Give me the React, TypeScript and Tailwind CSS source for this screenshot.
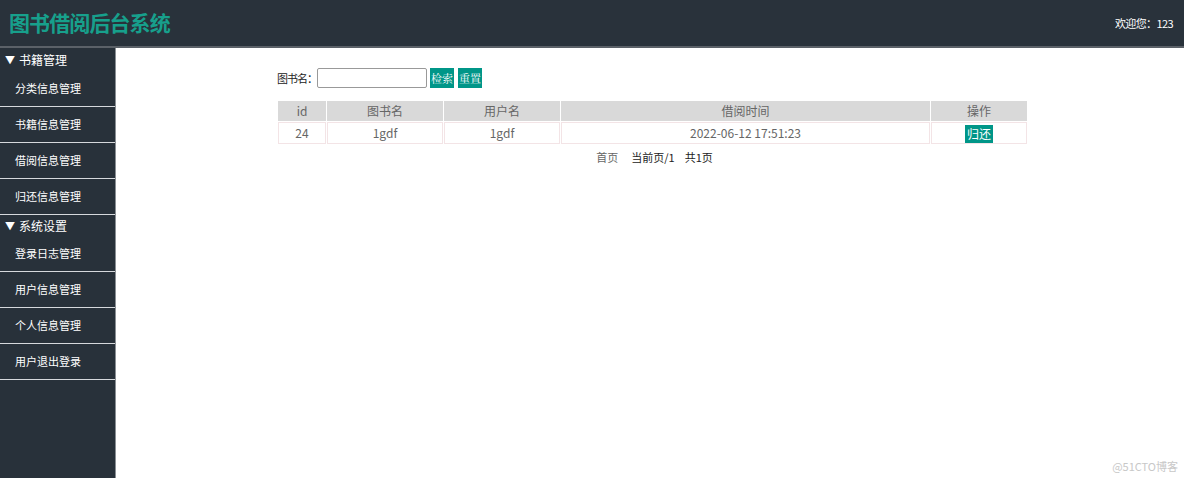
import React from "react";

const font = { fontFamily: '"Noto Sans CJK SC", "Noto Sans", sans-serif' };
const serif = { fontFamily: '"Noto Serif CJK SC", "Noto Sans CJK SC", serif' };

const group1 = ["分类信息管理", "书籍信息管理", "借阅信息管理", "归还信息管理"];
const group2 = ["登录日志管理", "用户信息管理", "个人信息管理", "用户退出登录"];

function Group({ title, items, h }: { title: string; items: string[]; h: string }) {
  return (
    <div>
      <div className={`${h} flex items-center pl-[5px] text-[12px] text-white`}>
        <span className="text-[10px] mr-[4px]">▼</span>
        {title}
      </div>
      {items.map((it) => (
        <div
          key={it}
          className="h-[36px] flex items-center pl-[15px] text-[11px] text-white border-b border-[#d6d9dc]"
        >
          {it}
        </div>
      ))}
    </div>
  );
}

export default function App() {
  return (
    <div className="relative w-full h-screen flex flex-col bg-white overflow-hidden" style={font}>
      <header className="h-[48px] shrink-0 bg-[#29323b] border-b-2 border-[#5b6168] flex items-center justify-between pl-[9px] pr-[11px]">
        <div className="text-[21px] font-bold text-[#17a08c] tracking-[-0.9px]">图书借阅后台系统</div>
        <div className="text-[11px] text-white tracking-[-0.6px]">欢迎您：123</div>
      </header>
      <div className="flex flex-1 min-h-0">
        <aside className="w-[116px] shrink-0 bg-[#28313a] border-r border-[#8a8f94]">
          <Group title="书籍管理" items={group1} h="h-[23px]" />
          <Group title="系统设置" items={group2} h="h-[21px]" />
        </aside>
        <main className="flex-1 pl-[161px] pt-[20px]">
          <div className="flex items-center h-[20px] text-[11px] text-[#222]">
            <span className="tracking-[-1px]">图书名：</span>
            <input className="w-[110px] h-[20px] border border-[#999] rounded-[2px] outline-none" />
            <button className="ml-[3px] h-[20px] px-[1px] bg-[#009688] text-white text-[11px] leading-none" style={serif}>检索</button>
            <button className="ml-[4px] h-[20px] px-[1px] bg-[#009688] text-white text-[11px] leading-none" style={serif}>重置</button>
          </div>
          <table className="mt-[12px] table-fixed border-separate border-spacing-[1px] w-[751px] text-[12px] text-[#666]">
            <colgroup>
              <col className="w-[48px]" />
              <col className="w-[116px]" />
              <col className="w-[116px]" />
              <col className="w-[369px]" />
              <col className="w-[96px]" />
            </colgroup>
            <thead>
              <tr className="h-[20px]">
                {["id", "图书名", "用户名", "借阅时间", "操作"].map((h) => (
                  <th key={h} className="bg-[#d9d9d9] font-normal text-center p-0 leading-[20px]">{h}</th>
                ))}
              </tr>
            </thead>
            <tbody>
              <tr className="h-[21px]">
                <td className="border border-[#f3e4e6] text-center p-0">24</td>
                <td className="border border-[#f3e4e6] text-center p-0">1gdf</td>
                <td className="border border-[#f3e4e6] text-center p-0">1gdf</td>
                <td className="border border-[#f3e4e6] text-center p-0">2022-06-12 17:51:23</td>
                <td className="border border-[#f3e4e6] text-center p-0">
                  <span className="inline-block bg-[#009688] text-white px-[2px] h-[18px] leading-[18px] align-middle">归还</span>
                </td>
              </tr>
            </tbody>
          </table>
          <div className="w-[751px] flex justify-center mt-[4px] text-[11px] text-[#222] pl-[4px]">
            <span className="text-[#666]">首页</span>
            <span className="ml-[13px]">当前页/1</span>
            <span className="ml-[10px]">共1页</span>
          </div>
        </main>
      </div>
      <div className="absolute right-[6px] bottom-[4px] text-[11px] text-[#c8c8c8]">@51CTO博客</div>
    </div>
  );
}
